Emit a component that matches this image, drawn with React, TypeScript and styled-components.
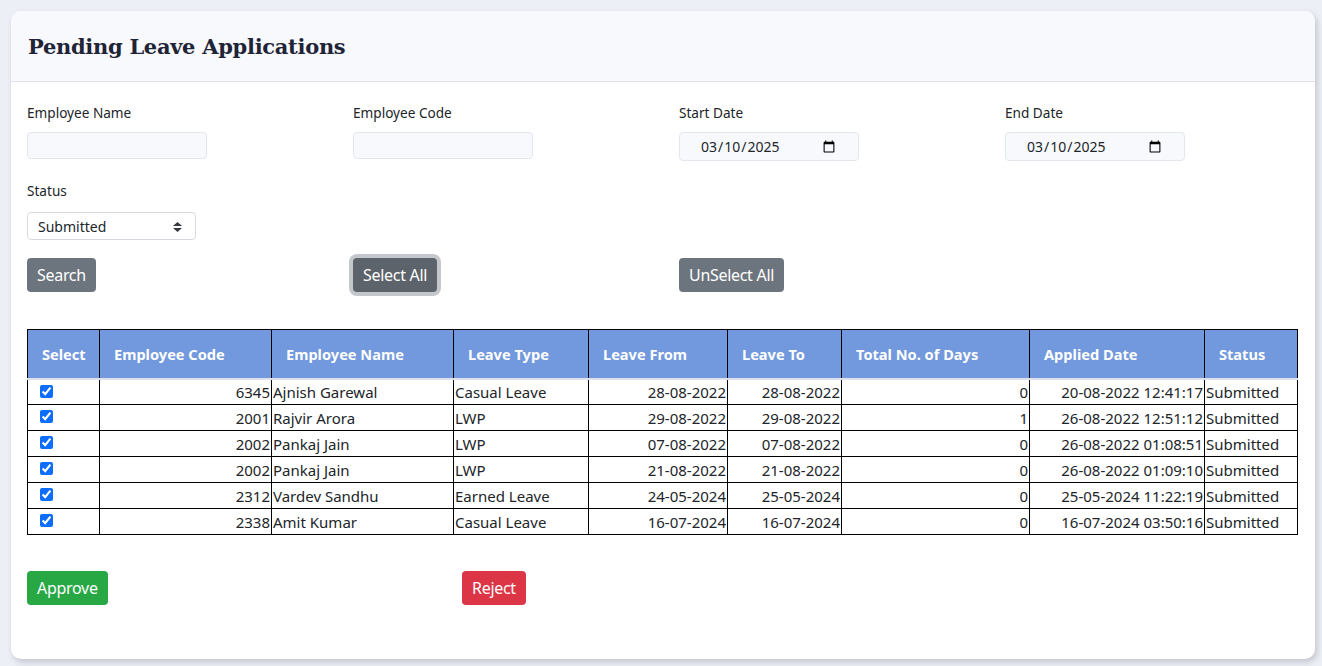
import * as React from 'react';
import styled, { createGlobalStyle } from 'styled-components';

const GlobalStyle = createGlobalStyle`
  html, body {
    margin: 0;
    padding: 0;
    background: #eceff6;
    font-family: "Noto Sans", "Open Sans", sans-serif;
    color: #212529;
  }
  * {
    box-sizing: border-box;
  }
`;

const Page = styled.div`
  padding: 11px 7px 7px 11px;
  min-height: 666px;
`;

const Card = styled.div`
  width: 1304px;
  height: 648px;
  background: #fff;
  border-radius: 10px;
  box-shadow: 2px 3px 6px rgba(0, 0, 0, 0.18);
  overflow: hidden;
`;

const CardHeader = styled.div`
  height: 71px;
  display: flex;
  align-items: center;
  padding: 0 17px;
  background: #f8f9fc;
  border-bottom: 1px solid #dfe2e8;
`;

const Title = styled.h1`
  margin: 0;
  font-family: "DejaVu Serif", "Liberation Serif", serif;
  font-size: 21px;
  font-weight: bold;
  color: #1f2437;
  letter-spacing: -0.3px;
`;

const CardBody = styled.div`
  padding: 20px 16px 0 16px;
`;

const FieldGrid = styled.div`
  display: grid;
  grid-template-columns: repeat(4, 326px);
  row-gap: 19px;
`;

const Field = styled.div`
  display: flex;
  flex-direction: column;
  align-items: flex-start;
`;

const Label = styled.label`
  font-size: 13.6px;
  line-height: 21px;
  margin-bottom: 9px;
  color: #212529;
`;

const TextInput = styled.input`
  width: 180px;
  height: 27px;
  background: #f8f9fc;
  border: 1px solid #e3e6ec;
  border-radius: 4px;
  outline: none;
`;

const DateInput = styled.input`
  width: 180px;
  height: 29px;
  padding: 0 20px;
  background: #f8f9fc;
  border: 1px solid #e3e6ec;
  border-radius: 4px;
  font-family: "Noto Sans", "Open Sans", sans-serif;
  font-size: 14px;
  color: #212529;
  outline: none;
`;

const SelectWrap = styled.div`
  position: relative;
  margin-top: 2px;
`;

const Select = styled.select`
  appearance: none;
  width: 169px;
  height: 28px;
  padding: 0 10px;
  background: #fff;
  border: 1px solid #d7dbe1;
  border-radius: 4px;
  font-family: "Noto Sans", "Open Sans", sans-serif;
  font-size: 14px;
  color: #212529;
  outline: none;
`;

const SelectArrow = styled.svg`
  position: absolute;
  right: 14px;
  top: 10px;
  pointer-events: none;
`;

const ButtonGrid = styled.div<{ $cols: string }>`
  display: grid;
  grid-template-columns: ${p => p.$cols};
  align-items: start;
`;

const colors = {
  gray: '#6c757d',
  dark: '#5c636a',
  green: '#28a745',
  red: '#dc3545'
};

const Button = styled.button<{ $tone: keyof typeof colors; $focused?: boolean }>`
  justify-self: start;
  height: 34px;
  padding: 0 10px;
  border: none;
  border-radius: 4px;
  background: ${p => colors[p.$tone]};
  color: #fff;
  font-family: "Noto Sans", "Open Sans", sans-serif;
  font-size: 16px;
  letter-spacing: -0.3px;
  cursor: pointer;
  box-shadow: ${p => (p.$focused ? '0 0 0 4px #c4c7cb' : 'none')};
`;

const TopButtons = styled(ButtonGrid)`
  margin-top: 18px;
`;

const BottomButtons = styled(ButtonGrid)`
  margin-top: 36px;
`;

const Table = styled.table`
  margin-top: 37px;
  width: 1270px;
  border-collapse: collapse;
  table-layout: fixed;
  font-size: 15px;
`;

const HeadCell = styled.th`
  height: 49px;
  padding: 0 14px;
  background: #7298dd;
  color: #fff;
  font-size: 14.6px;
  font-weight: bold;
  text-align: left;
  border: 1px solid #000;
  border-bottom: 2px solid #dde2ea;
  white-space: nowrap;
`;

const Cell = styled.td<{ $align?: 'left' | 'right' }>`
  height: 26px;
  padding: 0 1px;
  border: 1px solid #000;
  text-align: ${p => p.$align || 'left'};
  white-space: nowrap;
  line-height: 24px;
  color: #212529;
`;

const CheckCell = styled.td`
  height: 26px;
  padding: 0 0 0 8px;
  border: 1px solid #000;
  vertical-align: top;
`;

const Check = styled.input`
  width: 13px;
  height: 13px;
  margin: 5px 0 0 4px;
  accent-color: #0d6efd;
`;

type Leave = {
  code: number;
  name: string;
  type: string;
  from: string;
  to: string;
  days: number;
  applied: string;
};

const leaves: Leave[] = [
  { code: 6345, name: 'Ajnish Garewal', type: 'Casual Leave', from: '28-08-2022', to: '28-08-2022', days: 0, applied: '20-08-2022 12:41:17' },
  { code: 2001, name: 'Rajvir Arora', type: 'LWP', from: '29-08-2022', to: '29-08-2022', days: 1, applied: '26-08-2022 12:51:12' },
  { code: 2002, name: 'Pankaj Jain', type: 'LWP', from: '07-08-2022', to: '07-08-2022', days: 0, applied: '26-08-2022 01:08:51' },
  { code: 2002, name: 'Pankaj Jain', type: 'LWP', from: '21-08-2022', to: '21-08-2022', days: 0, applied: '26-08-2022 01:09:10' },
  { code: 2312, name: 'Vardev Sandhu', type: 'Earned Leave', from: '24-05-2024', to: '25-05-2024', days: 0, applied: '25-05-2024 11:22:19' },
  { code: 2338, name: 'Amit Kumar', type: 'Casual Leave', from: '16-07-2024', to: '16-07-2024', days: 0, applied: '16-07-2024 03:50:16' }
];

const columns = [
  { title: 'Select', width: 72 },
  { title: 'Employee Code', width: 172 },
  { title: 'Employee Name', width: 182 },
  { title: 'Leave Type', width: 135 },
  { title: 'Leave From', width: 139 },
  { title: 'Leave To', width: 114 },
  { title: 'Total No. of Days', width: 188 },
  { title: 'Applied Date', width: 175 },
  { title: 'Status', width: 93 }
];

export default function App() {
  const [checked, setChecked] = React.useState<boolean[]>(leaves.map(() => true));

  const toggle = (index: number) => () => {
    setChecked(prev => prev.map((value, i) => (i === index ? !value : value)));
  };

  return (
    <Page>
      <GlobalStyle />
      <Card>
        <CardHeader>
          <Title>Pending Leave Applications</Title>
        </CardHeader>

        <CardBody>
          <FieldGrid>
            <Field>
              <Label>Employee Name</Label>
              <TextInput type="text" />
            </Field>
            <Field>
              <Label>Employee Code</Label>
              <TextInput type="text" />
            </Field>
            <Field>
              <Label>Start Date</Label>
              <DateInput type="date" defaultValue="2025-03-10" />
            </Field>
            <Field>
              <Label>End Date</Label>
              <DateInput type="date" defaultValue="2025-03-10" />
            </Field>
            <Field>
              <Label>Status</Label>
              <SelectWrap>
                <Select defaultValue="Submitted">
                  <option>Submitted</option>
                  <option>Approved</option>
                  <option>Rejected</option>
                </Select>
                <SelectArrow width="9" height="10" viewBox="0 0 9 10">
                  <path d="M4.5 0 L9 4 H0 Z M0 6 H9 L4.5 10 Z" fill="#343a40" />
                </SelectArrow>
              </SelectWrap>
            </Field>
          </FieldGrid>

          <TopButtons $cols="326px 326px 326px">
            <Button $tone="gray">Search</Button>
            <Button $tone="dark" $focused>Select All</Button>
            <Button $tone="gray">UnSelect All</Button>
          </TopButtons>

          <Table>
            <colgroup>
              {columns.map(column => (
                <col key={column.title} style={{ width: column.width }} />
              ))}
            </colgroup>
            <thead>
              <tr>
                {columns.map(column => (
                  <HeadCell key={column.title}>{column.title}</HeadCell>
                ))}
              </tr>
            </thead>
            <tbody>
              {leaves.map((leave, index) => (
                <tr key={index}>
                  <CheckCell>
                    <Check type="checkbox" checked={checked[index]} onChange={toggle(index)} />
                  </CheckCell>
                  <Cell $align="right">{leave.code}</Cell>
                  <Cell>{leave.name}</Cell>
                  <Cell>{leave.type}</Cell>
                  <Cell $align="right">{leave.from}</Cell>
                  <Cell $align="right">{leave.to}</Cell>
                  <Cell $align="right">{leave.days}</Cell>
                  <Cell $align="right">{leave.applied}</Cell>
                  <Cell>Submitted</Cell>
                </tr>
              ))}
            </tbody>
          </Table>

          <BottomButtons $cols="435px auto">
            <Button $tone="green">Approve</Button>
            <Button $tone="red">Reject</Button>
          </BottomButtons>
        </CardBody>
      </Card>
    </Page>
  );
}
